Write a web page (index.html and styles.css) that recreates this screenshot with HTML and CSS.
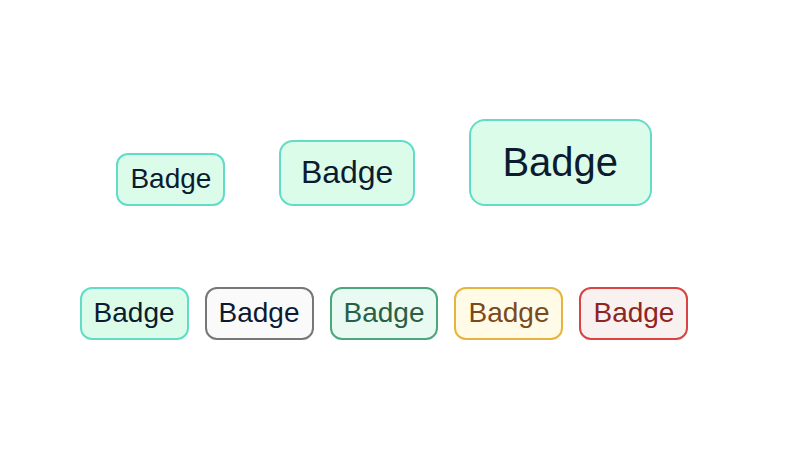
FILE: index.html
```html
<!DOCTYPE html>
<html lang="en">
<head>
<meta charset="utf-8">
<title>Badges</title>
<link rel="stylesheet" href="styles.css">
</head>
<body>
<main class="page">
  <div class="row row-sizes">
    <span class="badge badge-sm badge-primary">Badge</span>
    <span class="badge badge-md badge-primary">Badge</span>
    <span class="badge badge-lg badge-primary">Badge</span>
  </div>
  <div class="row row-variants">
    <span class="badge badge-sm badge-primary">Badge</span>
    <span class="badge badge-sm badge-neutral">Badge</span>
    <span class="badge badge-sm badge-success">Badge</span>
    <span class="badge badge-sm badge-warning">Badge</span>
    <span class="badge badge-sm badge-error">Badge</span>
  </div>
</main>
</body>
</html>
```

FILE: styles.css
```css
html, body {
  margin: 0;
  padding: 0;
  background: #ffffff;
}

body {
  font-family: "Liberation Sans", Arial, sans-serif;
}

.page {
  width: 768px;
  height: 450px;
  box-sizing: border-box;
  padding-top: 118.5px;
  display: flex;
  flex-direction: column;
  align-items: center;
  gap: 81px;
}

.row {
  display: flex;
  justify-content: center;
}

.row-sizes {
  align-items: flex-end;
  gap: 53.5px;
}

.row-variants {
  gap: 16px;
}

.badge {
  display: inline-block;
  border: 2px solid #62dcc9;
  background: #dcfcea;
  color: #0c1b30;
  white-space: nowrap;
}

.badge-sm {
  font-size: 28px;
  line-height: 32px;
  padding: 8.5px 12px;
  border-radius: 12px;
}

.badge-md {
  font-size: 32px;
  line-height: 37px;
  padding: 12.5px 20px;
  border-radius: 14px;
}

.badge-lg {
  font-size: 40px;
  line-height: 46px;
  padding: 18.5px 31.5px;
  border-radius: 16px;
}

.badge-primary {
  border-color: #62dcc9;
  background: #dcfcea;
  color: #0c1b30;
}

.badge-neutral {
  border-color: #777777;
  background: #fafafa;
  color: #0c1b30;
}

.badge-success {
  border-color: #4aa87a;
  background: #e8faf1;
  color: #2a5f46;
}

.badge-warning {
  border-color: #e6b440;
  background: #fffbe7;
  color: #7b4a1b;
}

.badge-error {
  border-color: #da4343;
  background: #f9f0f0;
  color: #8e2525;
}
```
